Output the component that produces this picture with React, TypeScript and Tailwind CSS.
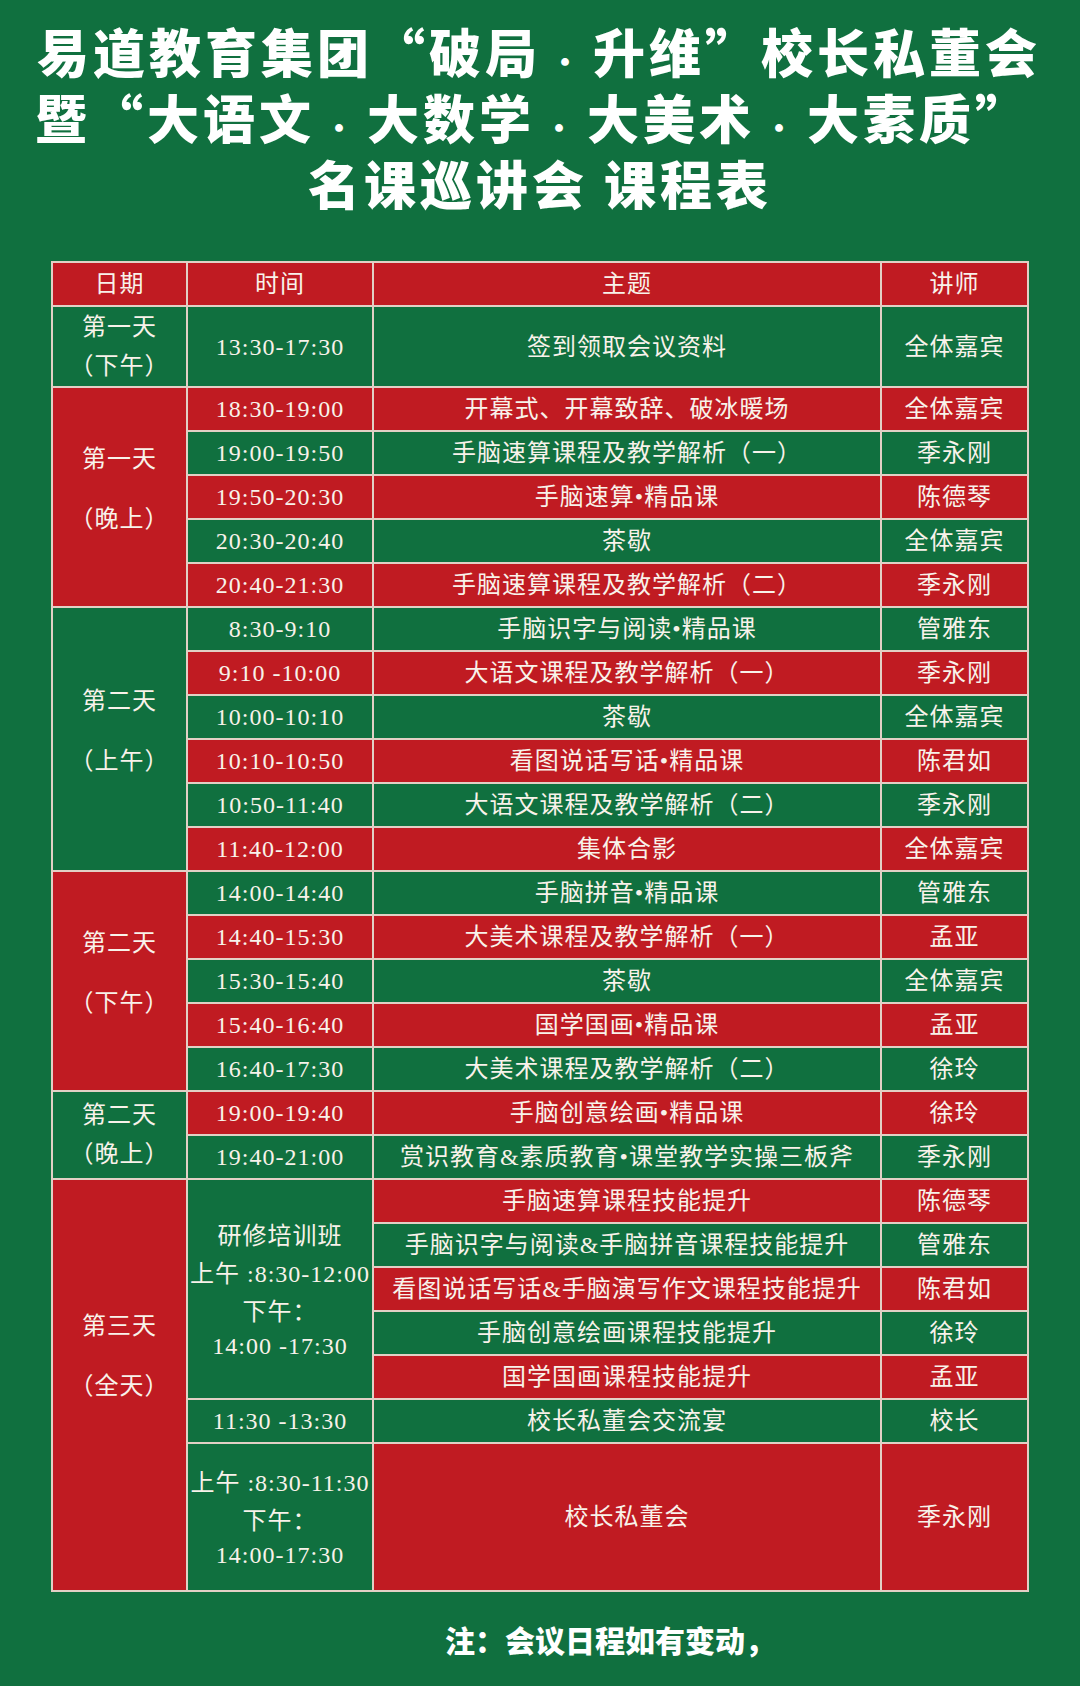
import React from "react";

type C = "r" | "g";

const BG: Record<C, string> = {
  r: "bg-[#c01b22]",
  g: "bg-[#10703f]",
};

const CELL = "border-2 border-[#e2d0c5] p-0 text-center align-middle whitespace-nowrap";

type Item = { time: string; topic: string; who: string; c: C };

type Section = {
  day: string;
  part: string;
  c: C;
  tall: boolean;
  items: Item[];
};

const sections: Section[] = [
  {
    day: "第一天",
    part: "（晚上）",
    c: "r",
    tall: true,
    items: [
      { time: "18:30-19:00", topic: "开幕式、开幕致辞、破冰暖场", who: "全体嘉宾", c: "r" },
      { time: "19:00-19:50", topic: "手脑速算课程及教学解析（一）", who: "季永刚", c: "g" },
      { time: "19:50-20:30", topic: "手脑速算•精品课", who: "陈德琴", c: "r" },
      { time: "20:30-20:40", topic: "茶歇", who: "全体嘉宾", c: "g" },
      { time: "20:40-21:30", topic: "手脑速算课程及教学解析（二）", who: "季永刚", c: "r" },
    ],
  },
  {
    day: "第二天",
    part: "（上午）",
    c: "g",
    tall: true,
    items: [
      { time: "8:30-9:10", topic: "手脑识字与阅读•精品课", who: "管雅东", c: "g" },
      { time: "9:10 -10:00", topic: "大语文课程及教学解析（一）", who: "季永刚", c: "r" },
      { time: "10:00-10:10", topic: "茶歇", who: "全体嘉宾", c: "g" },
      { time: "10:10-10:50", topic: "看图说话写话•精品课", who: "陈君如", c: "r" },
      { time: "10:50-11:40", topic: "大语文课程及教学解析（二）", who: "季永刚", c: "g" },
      { time: "11:40-12:00", topic: "集体合影", who: "全体嘉宾", c: "r" },
    ],
  },
  {
    day: "第二天",
    part: "（下午）",
    c: "r",
    tall: true,
    items: [
      { time: "14:00-14:40", topic: "手脑拼音•精品课", who: "管雅东", c: "g" },
      { time: "14:40-15:30", topic: "大美术课程及教学解析（一）", who: "孟亚", c: "r" },
      { time: "15:30-15:40", topic: "茶歇", who: "全体嘉宾", c: "g" },
      { time: "15:40-16:40", topic: "国学国画•精品课", who: "孟亚", c: "r" },
      { time: "16:40-17:30", topic: "大美术课程及教学解析（二）", who: "徐玲", c: "g" },
    ],
  },
  {
    day: "第二天",
    part: "（晚上）",
    c: "g",
    tall: false,
    items: [
      { time: "19:00-19:40", topic: "手脑创意绘画•精品课", who: "徐玲", c: "r" },
      { time: "19:40-21:00", topic: "赏识教育&素质教育•课堂教学实操三板斧", who: "季永刚", c: "g" },
    ],
  },
];

const training: { topic: string; who: string; c: C }[] = [
  { topic: "手脑速算课程技能提升", who: "陈德琴", c: "r" },
  { topic: "手脑识字与阅读&手脑拼音课程技能提升", who: "管雅东", c: "g" },
  { topic: "看图说话写话&手脑演写作文课程技能提升", who: "陈君如", c: "r" },
  { topic: "手脑创意绘画课程技能提升", who: "徐玲", c: "g" },
  { topic: "国学国画课程技能提升", who: "孟亚", c: "r" },
];

function DayCell({ day, part, c, rows, tall, push = "pb-4" }: { day: string; part: string; c: C; rows: number; tall: boolean; push?: string }) {
  return (
    <td rowSpan={rows} className={`${CELL} ${BG[c]}`}>
      <div className={`flex flex-col items-center ${tall ? `gap-[18px] leading-[42px] ${push}` : "leading-[39px]"}`}>
        <div>{day}</div>
        <div>{part}</div>
      </div>
    </td>
  );
}

// small separator dot in the headline, one character wide
function Dot() {
  return <span className="inline-block w-[52px] text-center text-[28px] leading-none">·</span>;
}

export default function App() {
  return (
    <div className="min-h-[1686px] w-[1080px] bg-[#10703f] text-[#f8f2ea]">
      {/* Title */}
      <div
        className="pt-[18px] text-[52px] font-black leading-[66px] tracking-[4px] text-white"
        style={{ fontFamily: "'Noto Sans CJK SC', sans-serif" }}
      >
        <div className="pl-[37px] whitespace-nowrap">
          易道教育集团“破局<Dot />升维”校长私董会
        </div>
        <div className="pl-[35px] whitespace-nowrap">
          暨“大语文<Dot />大数学<Dot />大美术<Dot />大素质”
        </div>
        <div className="text-center whitespace-nowrap">名课巡讲会 课程表</div>
      </div>

      {/* Schedule */}
      <table
        className="mx-auto mt-[45px] w-[976px] table-fixed border-collapse text-[24px] tracking-[1px]"
        style={{ fontFamily: "'Liberation Serif', 'Noto Sans CJK SC', serif" }}
      >
        <colgroup>
          <col className="w-[135px]" />
          <col className="w-[186px]" />
          <col className="w-[508px]" />
          <col className="w-[147px]" />
        </colgroup>
        <thead>
          <tr className="h-[44px]">
            {["日期", "时间", "主题", "讲师"].map((h) => (
              <th key={h} className={`${CELL} ${BG.r} font-normal`}>
                {h}
              </th>
            ))}
          </tr>
        </thead>
        <tbody>
          <tr className="h-[81px]">
            <DayCell day="第一天" part="（下午）" c="g" rows={1} tall={false} />
            <td className={`${CELL} ${BG.g}`}>13:30-17:30</td>
            <td className={`${CELL} ${BG.g}`}>签到领取会议资料</td>
            <td className={`${CELL} ${BG.g}`}>全体嘉宾</td>
          </tr>

          {sections.map((s, si) =>
            s.items.map((it, i) => (
              <tr key={`${si}-${i}`} className="h-[44px]">
                {i === 0 && <DayCell day={s.day} part={s.part} c={s.c} rows={s.items.length} tall={s.tall} />}
                <td className={`${CELL} ${BG[it.c]}`}>{it.time}</td>
                <td className={`${CELL} ${BG[it.c]}`}>{it.topic}</td>
                <td className={`${CELL} ${BG[it.c]}`}>{it.who}</td>
              </tr>
            ))
          )}

          {/* Day three */}
          {training.map((t, i) => (
            <tr key={t.topic} className="h-[44px]">
              {i === 0 && <DayCell day="第三天" part="（全天）" c="r" rows={7} tall push="pb-[58px]" />}
              {i === 0 && (
                <td rowSpan={5} className={`${CELL} ${BG.g}`}>
                  <div className="flex flex-col items-center leading-[38px]">
                    <div>研修培训班</div>
                    <div>上午 :8:30-12:00</div>
                    <div>下午：</div>
                    <div className="leading-[30px]">14:00 -17:30</div>
                  </div>
                </td>
              )}
              <td className={`${CELL} ${BG[t.c]}`}>{t.topic}</td>
              <td className={`${CELL} ${BG[t.c]}`}>{t.who}</td>
            </tr>
          ))}
          <tr className="h-[44px]">
            <td className={`${CELL} ${BG.g}`}>11:30 -13:30</td>
            <td className={`${CELL} ${BG.g}`}>校长私董会交流宴</td>
            <td className={`${CELL} ${BG.g}`}>校长</td>
          </tr>
          <tr className="h-[148px]">
            <td className={`${CELL} ${BG.g}`}>
              <div className="flex flex-col items-center leading-[38px]">
                <div>上午 :8:30-11:30</div>
                <div>下午：</div>
                <div className="leading-[30px]">14:00-17:30</div>
              </div>
            </td>
            <td className={`${CELL} ${BG.r}`}>校长私董会</td>
            <td className={`${CELL} ${BG.r}`}>季永刚</td>
          </tr>
        </tbody>
      </table>

      {/* Note */}
      <div
        className="flex h-[94px] items-center pl-[445px] text-[30px] font-black text-white"
        style={{ fontFamily: "'Noto Sans CJK SC', sans-serif" }}
      >
        注：会议日程如有变动，
      </div>
    </div>
  );
}
